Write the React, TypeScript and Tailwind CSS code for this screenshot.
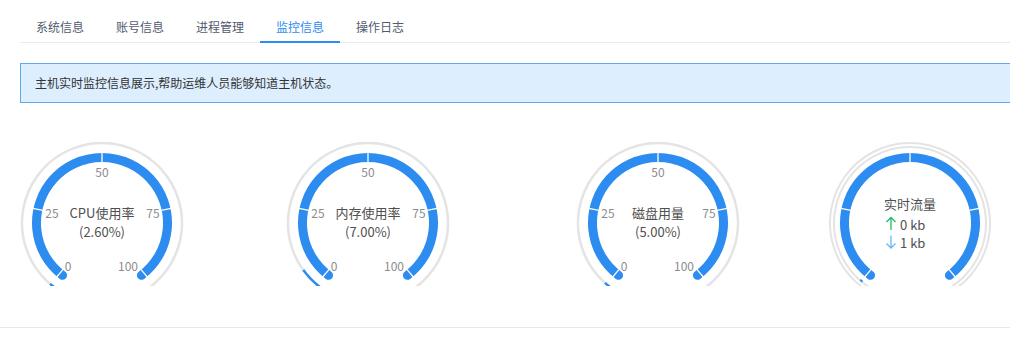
import React from "react";

const BLUE = "#2d8cf0";
const FONT = '"Noto Sans CJK SC", "Noto Sans", sans-serif';

const pt = (cx: number, cy: number, r: number, deg: number) => {
  const a = (deg * Math.PI) / 180;
  return [cx + r * Math.cos(a), cy - r * Math.sin(a)];
};

const arc = (cx: number, cy: number, r: number, a1: number, a2: number) => {
  const [x1, y1] = pt(cx, cy, r, a1);
  const [x2, y2] = pt(cx, cy, r, a2);
  const large = a1 - a2 > 180 ? 1 : 0;
  return `M ${x1.toFixed(2)} ${y1.toFixed(2)} A ${r} ${r} 0 ${large} 1 ${x2.toFixed(2)} ${y2.toFixed(2)}`;
};

type GaugeProps = {
  title: string;
  value?: string;
  progressEnd: number;
  traffic?: boolean;
};

function Gauge({ title, value, progressEnd, traffic }: GaugeProps) {
  const cx = 102;
  const cy = 100;
  const ticks = [230, 168, 90, 12, -50];
  return (
    <svg width={204} height={163} className="block shrink-0" style={{ fontFamily: FONT }}>
      {traffic ? (
        <>
          <path d={arc(cx, cy, 80, 252, -72)} fill="none" stroke="#e4e4e4" strokeWidth={2} />
          <path d={arc(cx, cy, 76, 252, -72)} fill="none" stroke="#e4e4e4" strokeWidth={2} />
          <path d={arc(cx, cy, 75.5, 231, 228.8)} fill="none" stroke={BLUE} strokeWidth={2} />
        </>
      ) : (
        <>
          <path d={arc(cx, cy, 80, 252, -72)} fill="none" stroke="#e4e4e4" strokeWidth={2.5} />
          <path d={arc(cx, cy, 80, 250, progressEnd)} fill="none" stroke={BLUE} strokeWidth={2.5} />
        </>
      )}
      <path
        d={arc(cx, cy, 65.5, 233, -53)}
        fill="none"
        stroke={BLUE}
        strokeWidth={9}
        strokeLinecap="round"
      />
      {ticks.map((t) => {
        const [x1, y1] = pt(cx, cy, 60.5, t);
        const [x2, y2] = pt(cx, cy, 70.5, t);
        return <line key={t} x1={x1} y1={y1} x2={x2} y2={y2} stroke="#fff" strokeWidth={1.3} />;
      })}
      {!traffic && (
        <g fill="#8c8c8c" fontSize={12} textAnchor="middle" dominantBaseline="central">
          <text x={102} y={48}>50</text>
          <text x={52} y={89}>25</text>
          <text x={153} y={89}>75</text>
          <text x={68} y={142}>0</text>
          <text x={128} y={142}>100</text>
        </g>
      )}
      {!traffic ? (
        <g fill="#505050" fontSize={13} textAnchor="middle" dominantBaseline="central">
          <text x={102} y={89}>{title}</text>
          <text x={102} y={108}>{value}</text>
        </g>
      ) : (
        <g fontSize={13} dominantBaseline="central" fill="#505050">
          <text x={102} y={80} textAnchor="middle">{title}</text>
          <path d="M 83 107 L 83 94.5 M 78.5 99 L 83 94.5 L 87.5 99" fill="none" stroke="#19be6b" strokeWidth={1.3} />
          <text x={92} y={101}>0 kb</text>
          <path d="M 83 112.5 L 83 125 M 78.5 120.5 L 83 125 L 87.5 120.5" fill="none" stroke="#6cb6f4" strokeWidth={1.3} />
          <text x={92} y={119}>1 kb</text>
        </g>
      )}
    </svg>
  );
}

const tabs = ["系统信息", "账号信息", "进程管理", "监控信息", "操作日志"];

export default function App() {
  return (
    <div className="w-[1010px] h-[345px] bg-white overflow-hidden" style={{ fontFamily: FONT }}>
      <div className="ml-[20px] flex h-[43px] border-b border-[#e8eaec]">
        {tabs.map((t, i) => (
          <div
            key={t}
            className={`relative w-[80px] h-[42px] pt-[18px] text-center text-[12px] leading-[18px] ${
              i === 3 ? "text-[#2d8cf0]" : "text-[#515a6e]"
            }`}
          >
            {t}
            {i === 3 && <div className="absolute left-0 right-0 bottom-[-1px] h-[2px] bg-[#2d8cf0]" />}
          </div>
        ))}
      </div>
      <div className="ml-[20px] mt-[20px] w-[1000px] h-[40px] border border-[#5fa9ee] bg-[#ddeeff] flex items-center px-[14px] text-[12px] text-[#333]">
        主机实时监控信息展示,帮助运维人员能够知道主机状态。
      </div>
      <div className="mt-[20px] flex h-[163px]">
        <Gauge title="CPU使用率" value="(2.60%)" progressEnd={229.5} />
        <div className="ml-[62px]">
          <Gauge title="内存使用率" value="(7.00%)" progressEnd={216} />
        </div>
        <div className="ml-[86px]">
          <Gauge title="磁盘用量" value="(5.00%)" progressEnd={228.5} />
        </div>
        <div className="ml-[48px]">
          <Gauge title="实时流量" progressEnd={229} traffic />
        </div>
      </div>
      <div className="mt-[41px] h-px bg-[#e8e8e8]" />
    </div>
  );
}
